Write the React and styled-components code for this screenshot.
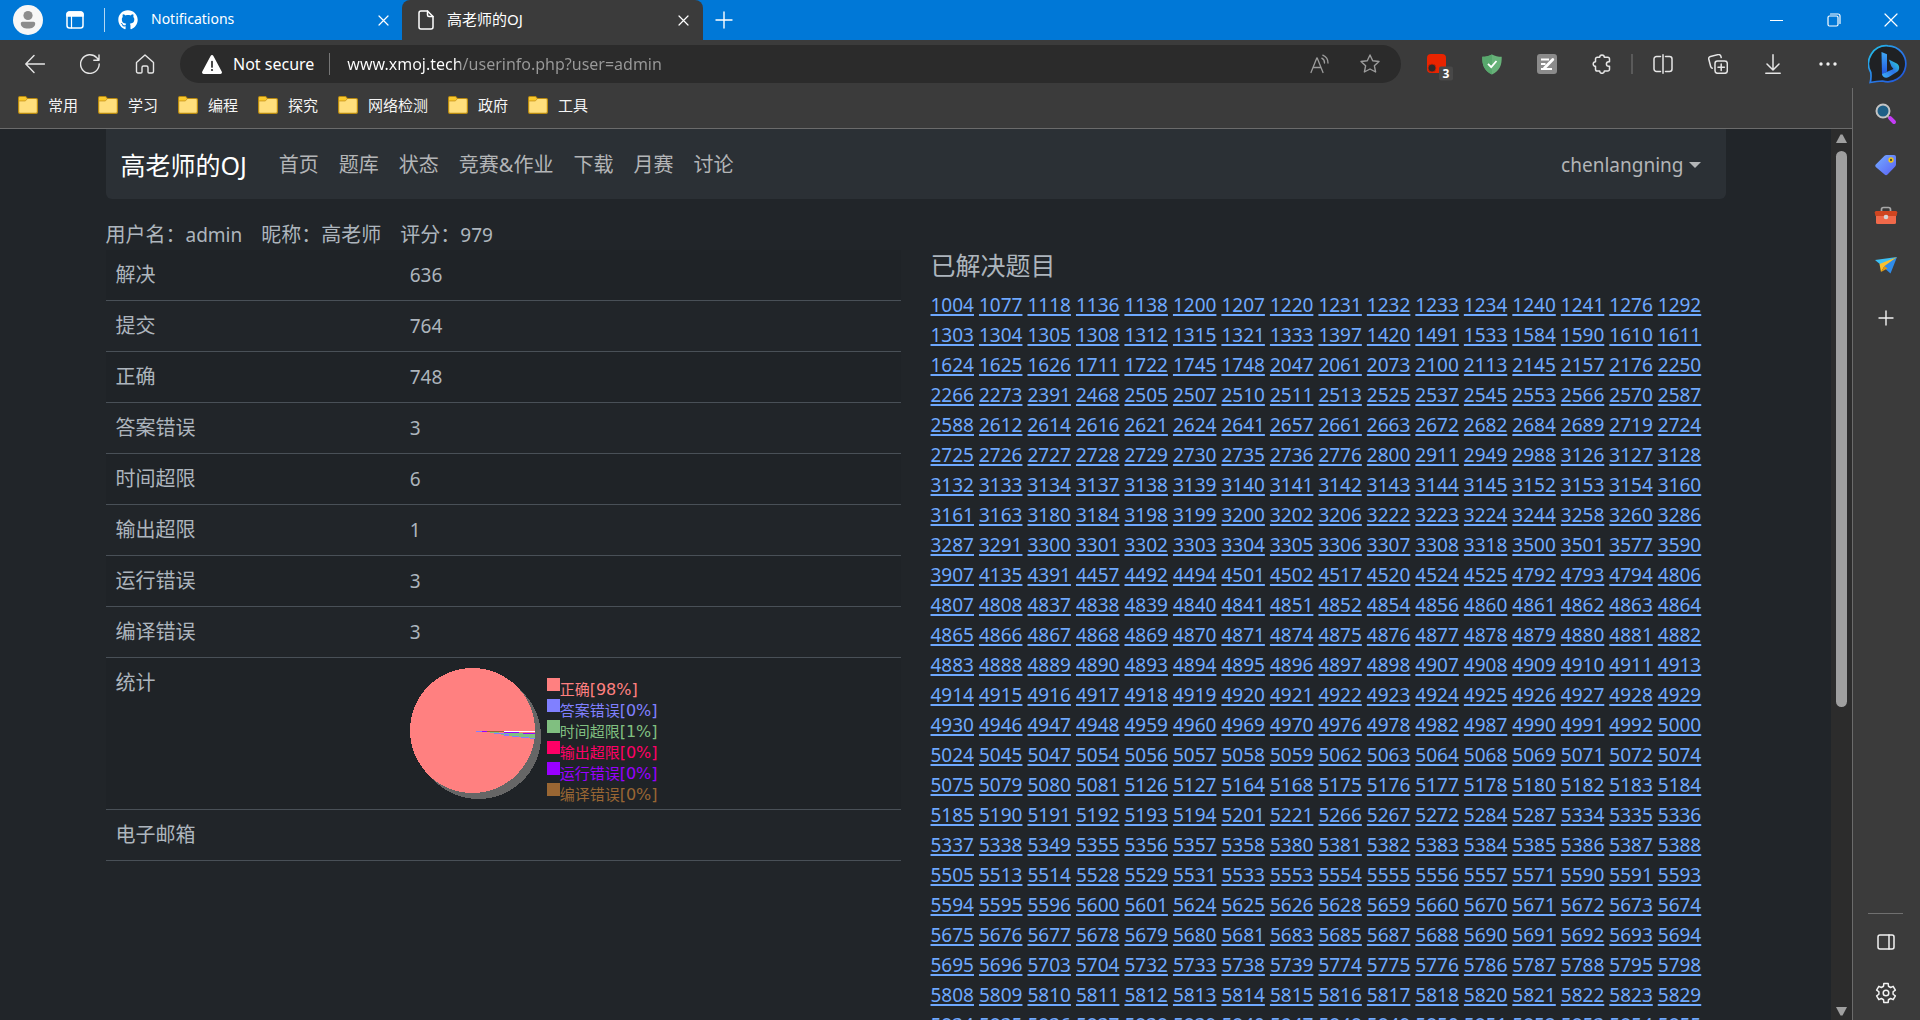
import React from "react";
import styled, { createGlobalStyle } from "styled-components";
import { FaGithub } from "react-icons/fa";

const SANS = '"Noto Sans", "Noto Sans CJK SC", sans-serif';

const GlobalStyle = createGlobalStyle`
  *, *::before, *::after { box-sizing: border-box; }
  body {
    margin: 0;
    background: #212529;
    color: #adb5bd;
    font-family: ${SANS};
    font-size: 20px;
    line-height: 30px;
  }
  button, input { font-family: inherit; border: 0; background: none; padding: 0; color: inherit; }
  svg { display: block; flex: none; }
`;

/* ---------- window frame ---------- */

const Window = styled.div`
  display: flex;
  flex-direction: column;
  height: 100vh;
  overflow: hidden;
`;

const TabStrip = styled.div`
  display: flex;
  align-items: center;
  flex: none;
  height: 40px;
  background: #0078d7;
  color: #fff;
`;

const StripButton = styled.button`
  display: flex;
  align-items: center;
  justify-content: center;
  flex: none;
  width: ${(p) => p.$width}px;
  height: 40px;
`;

const StripDivider = styled.span`
  width: 1px;
  height: 24px;
  margin-left: 10px;
  background: #b3d7f3;
`;

const Tab = styled.div`
  display: flex;
  align-items: center;
  width: ${(p) => (p.$active ? 301 : 297)}px;
  height: 40px;
  padding: ${(p) => (p.$active ? "0 10px 0 16px" : "0 9px 0 13px")};
  background: ${(p) => (p.$active ? "#3b3b3b" : "transparent")};
  border-radius: 8px 8px 0 0;
`;

const TabTitle = styled.button`
  display: flex;
  align-items: center;
  flex: 1;
  gap: 13px;
  height: 40px;
  color: #fff;
  font-size: ${(p) => (p.$latin ? 14 : 15)}px;
  line-height: 20px;
  text-align: left;
`;

const TitleText = styled.span`
  padding-bottom: 2px;
`;

const Spacer = styled.span`
  flex: 1;
`;

const Toolbar = styled.div`
  display: flex;
  align-items: center;
  flex: none;
  height: 48px;
  padding-left: 7px;
  background: #3b3b3b;
  color: #e6e6e6;
`;

const ToolButton = styled.button`
  display: flex;
  align-items: center;
  justify-content: center;
  flex: none;
  width: 55px;
  height: 48px;
`;

const AddressBar = styled.div`
  display: flex;
  align-items: center;
  flex: 1;
  height: 38px;
  margin: 0 8px;
  padding: 0 6px 0 22px;
  border-radius: 19px;
  background: #2b2b2b;
`;

const Security = styled.button`
  display: flex;
  align-items: center;
  gap: 11px;
  padding-right: 15px;
  border-right: 1px solid #767676;
  color: #fff;
  font-size: 16px;
  line-height: 22px;
`;

const Url = styled.input`
  flex: 1;
  height: 30px;
  padding: 0 0 1px 17px;
  outline: 0;
  font-size: 16px;
  color: transparent;
  background: linear-gradient(90deg, #fff 130px, #9a9a9a 130px);
  background-clip: text;
  -webkit-background-clip: text;
`;

const PillButton = styled.button`
  display: flex;
  align-items: center;
  justify-content: center;
  width: 50px;
  height: 38px;
  color: #9c9c9c;
`;

const ToolDivider = styled.span`
  width: 2px;
  height: 20px;
  margin: 0 2px;
  background: #5a5a5a;
`;

const Assistant = styled.button`
  display: flex;
  align-items: center;
  justify-content: center;
  width: 65px;
  height: 48px;
  padding-bottom: 1px;
`;

const Below = styled.div`
  display: flex;
  flex: 1;
  min-height: 0;
`;

const Left = styled.div`
  display: flex;
  flex-direction: column;
  flex: 1;
  min-width: 0;
  background: #3b3b3b;
`;

const Bookmarks = styled.nav`
  display: flex;
  align-items: center;
  flex: none;
  gap: 20px;
  height: 41px;
  padding: 0 18px 6px;
  border-bottom: 1px solid #6b6b6b;
`;

const Bookmark = styled.a`
  display: flex;
  align-items: center;
  gap: 10px;
  color: #f5f5f5;
  font-size: 15px;
  line-height: 20px;
  text-decoration: none;
`;

const Viewport = styled.div`
  display: flex;
  flex: 1;
  min-height: 0;
`;

const ScrollTrack = styled.div`
  display: flex;
  flex-direction: column;
  align-items: center;
  width: 21px;
  padding: 5px 0 4px;
  background: #2c2c2c;
`;

const ScrollThumb = styled.div`
  width: 11px;
  height: 63%;
  margin-top: 8px;
  border-radius: 6px;
  background: #9f9f9f;
`;

const Sidebar = styled.aside`
  display: flex;
  flex-direction: column;
  align-items: center;
  flex: none;
  width: 68px;
  padding: 0 2px 2px 0;
  border-left: 1px solid #6b6b6b;
  background: #3b3b3b;
  color: #f2f2f2;
`;

const SideButton = styled.button`
  display: flex;
  align-items: center;
  justify-content: center;
  width: 51px;
  height: 51px;
`;

const SideDivider = styled.span`
  width: 35px;
  height: 1px;
  margin-bottom: 2px;
  background: #707070;
`;

/* ---------- page ---------- */

const Page = styled.main`
  flex: 1;
  min-width: 0;
  overflow: hidden;
  background: #212529;
`;

const Container = styled.div`
  max-width: 1650px;
  margin: 0 auto;
  padding: 0 15px;
`;

const Navbar = styled.nav`
  display: flex;
  align-items: center;
  height: 70px;
  padding: 2px 15px 0;
  border-radius: 0 0 6px 6px;
  background: #2b3035;
`;

const Brand = styled.a`
  margin-right: 22px;
  color: #fff;
  font-size: 25px;
  text-decoration: none;
`;

const NavLink = styled.a`
  padding: 10px;
  color: #b3b5b7;
  text-decoration: none;
`;

const UserMenu = styled.button`
  display: flex;
  align-items: center;
  gap: 5px;
  margin-left: auto;
  padding: 10px;
  color: #b3b5b7;
  font-size: 19px;
  line-height: 30px;
`;

const Summary = styled.div`
  display: flex;
  gap: 19px;
  padding-top: 21px;
`;

const Latin = styled.span`
  font-size: 19px;
`;

const Columns = styled.div`
  display: grid;
  grid-template-columns: 1fr 1fr;
  gap: 30px;
  align-items: start;
`;

const StatsTable = styled.table`
  width: 100%;
  border-collapse: separate;
  border-spacing: 0;
`;

const StatsRow = styled.tr`
  &:nth-child(odd) { background: #1f2327; }
`;

const StatsLabel = styled.th`
  width: 37%;
  height: 51px;
  padding: 10px;
  border-bottom: 1px solid #495057;
  font-weight: 400;
  text-align: left;
  vertical-align: top;
`;

const StatsValue = styled.td`
  padding: 10px;
  border-bottom: 1px solid #495057;
  font-size: 19px;
  vertical-align: top;
`;

const Chart = styled.div`
  display: flex;
  gap: 6px;
  height: 131px;
`;

const Legend = styled.ul`
  margin: 0;
  padding: 10px 0 0;
  list-style: none;
`;

const LegendItem = styled.li`
  display: flex;
  height: 21px;
  color: ${(p) => p.$color};
  font-family: "DejaVu Sans", "Noto Sans CJK SC", sans-serif;
  font-size: 15px;
  line-height: 24px;
  white-space: nowrap;
  &::before {
    content: "";
    width: 13px;
    height: 13px;
    background: ${(p) => p.$color};
  }
`;

const Share = styled.span`
  font-size: 16px;
`;

const Heading = styled.h2`
  margin: 0 0 10px;
  font-size: 25px;
  line-height: 30px;
  font-weight: 400;
`;

const Problems = styled.div`
  display: flex;
  flex-wrap: wrap;
  column-gap: 5px;
`;

const Problem = styled.a`
  color: #6ea8fe;
  font-size: 19px;
  line-height: 30px;
  text-decoration: underline;
  text-decoration-thickness: 2px;
  text-underline-offset: 2px;
`;

/* ---------- icons ---------- */

const Line = ({ w = 20, h = w, sw = 1.5, children, ...rest }) => (
  <svg width={w} height={h} viewBox={`0 0 ${w} ${h}`} fill="none" stroke="currentColor"
    strokeWidth={sw} strokeLinecap="round" strokeLinejoin="round" aria-hidden="true" {...rest}>
    {children}
  </svg>
);

const Avatar = () => (
  <svg width="30" height="30" viewBox="0 0 30 30" aria-hidden="true">
    <circle cx="15" cy="15" r="15" fill="#f7f7f7" />
    <circle cx="15" cy="10.5" r="4.6" fill="#8c8c8c" />
    <path d="M9.5 16.8h11c1 0 1.7.7 1.7 1.7 0 3.400-3 5.100-7.200 5.100s-7.200-1.700-7.200-5.100c0-1 .7-1.700 1.700-1.700z" fill="#8c8c8c" />
  </svg>
);

const Workspaces = () => (
  <Line w={18} sw={1.5}>
    <rect x="1" y="1" width="16" height="16" rx="2.500" />
    <path d="M1 3.500a2.500 2.500 0 0 1 2.500-2.500h11a2.500 2.500 0 0 1 2.500 2.500V5H1z" fill="currentColor" />
    <path d="M5.500 5v12" strokeWidth="1.200" />
  </Line>
);

const Cross = ({ size = 11 }) => (
  <Line w={size} sw={1.2}><path d={`M1 1L${size - 1} ${size - 1}M${size - 1} 1L1 ${size - 1}`} /></Line>
);

const Plus = ({ size = 18 }) => (
  <Line w={size} sw={1.4}><path d={`M${size / 2} 1v${size - 2}M1 ${size / 2}h${size - 2}`} /></Line>
);

const FilePage = () => (
  <Line w={16} h={20} sw={1.500}>
    <path d="M3 1h6.500L15 6.500V17a2 2 0 0 1-2 2H3a2 2 0 0 1-2-2V3a2 2 0 0 1 2-2z" />
    <path d="M9.500 1v4a1.500 1.500 0 0 0 1.500 1.500h4" />
  </Line>
);

const Back = () => <Line sw={1.4}><path d="M19.500 10H1M9 1.500L.8 10 9 18.500" /></Line>;

const Reload = () => (
  <Line sw={1.4}><path d="M19.200 10A9.300 9.300 0 1 1 16.800 3.800L18.800 6M19 1v5.200h-5.200" /></Line>
);

const Home = () => (
  <Line sw={1.4}>
    <path d="M1.500 8.500L10 1l8.500 7.500V17.500a1.500 1.500 0 0 1-1.500 1.500h-3a1 1 0 0 1-1-1v-4.500a1.500 1.500 0 0 0-1.500-1.500h-3A1.500 1.500 0 0 0 7 13.500V18a1 1 0 0 1-1 1H3a1.500 1.500 0 0 1-1.500-1.500z" />
  </Line>
);

const Warning = () => (
  <svg width="20" height="19" viewBox="0 0 20 19" aria-hidden="true">
    <path d="M8.600.9a1.600 1.600 0 0 1 2.800 0l8.300 15.700a1.600 1.600 0 0 1-1.400 2.400H1.700a1.600 1.600 0 0 1-1.400-2.400z" fill="#fff" />
    <path d="M10 6.500v5.500" stroke="#2b2b2b" strokeWidth="1.700" strokeLinecap="round" />
    <circle cx="10" cy="15" r="1.100" fill="#2b2b2b" />
  </svg>
);

const ReadAloud = () => (
  <Line sw={1.300}>
    <path d="M1 18.500L6.800 4h.4L13 18.500M3 13.500h8" />
    <path d="M11.800 4.200a5 5 0 0 1 2.700 4.800M12.800 1.200a8.500 8.500 0 0 1 5.200 7.800" />
  </Line>
);

const Star = () => (
  <Line sw={1.4}>
    <path d="M10 1l2.700 5.700 6.300.8-4.600 4.300 1.200 6.200L10 15l-5.600 3 1.200-6.200L1 7.500l6.300-.8z" />
  </Line>
);

const BlockerExt = () => (
  <svg width="34" height="36" viewBox="0 0 34 36" aria-hidden="true">
    <rect x="7" y="8" width="19" height="19" rx="4" fill="#e92400" />
    <circle cx="12" cy="22" r="4" fill="#2f2a2a" stroke="#d02000" strokeWidth=".8" />
    <rect x="19" y="20.500" width="14" height="14" rx="2" fill="#484848" />
    <text x="22.500" y="32" fontFamily="Noto Sans, sans-serif" fontWeight="700" fontSize="12" fill="#fff">3</text>
  </svg>
);

const Shield = () => (
  <svg width="20" height="21" viewBox="0 0 20 21" aria-hidden="true">
    <path d="M10 .5c3 1.700 6.200 2.200 9.700 2.300.2 8.200-1.700 13.700-9.700 17.700C2 16.500.1 11 .3 2.800 3.800 2.700 7 2.200 10 .5z" fill="#67b279" />
    <path d="M10 .5C7 2.200 3.800 2.700.3 2.800.1 11 2 16.500 10 20.500z" fill="#58a86d" />
    <path d="M6 9.800l3.200 3.400L14.500 7" fill="none" stroke="#fff" strokeWidth="1.800" />
  </svg>
);

const NotesExt = () => (
  <svg width="20" height="20" viewBox="0 0 20 20" fill="none" aria-hidden="true">
    <rect width="20" height="20" rx="3" fill="#8b8b8b" />
    <path d="M4 5.500h8M4 10h4.500M4 15h11" stroke="#fff" strokeWidth="1.800" />
    <path d="M15.800 5.500L7.500 14" stroke="#fff" strokeWidth="2.800" strokeLinecap="round" />
  </svg>
);

const Puzzle = () => (
  <Line sw={1.500}>
    <path d="M7.700 3.200a2.300 2.300 0 0 1 4.600 0h3.400a1.800 1.800 0 0 1 1.800 1.800v2.700h-.8a2.300 2.300 0 0 0 0 4.600h.8v2.900a1.800 1.800 0 0 1-1.800 1.800h-3.400a2.300 2.300 0 0 1-4.600 0H5.300a1.800 1.800 0 0 1-1.800-1.800v-2.900a2.300 2.300 0 0 1 0-4.600V5a1.800 1.800 0 0 1 1.800-1.800z" />
  </Line>
);

const Split = () => (
  <Line sw={1.500}>
    <path d="M7.500 2.500H3.500A2.500 2.500 0 0 0 1 5v10a2.500 2.500 0 0 0 2.500 2.500h4M12.500 2.500h4A2.500 2.500 0 0 1 19 5v10a2.500 2.500 0 0 1-2.500 2.500h-4M10 .8v18.400" />
  </Line>
);

const Collections = () => (
  <Line sw={1.500}>
    <rect x="7" y="7" width="12.300" height="12.300" rx="2.500" />
    <path d="M13.200 10v6.400M10 13.200h6.400" />
    <path d="M4.200 14.200a2.500 2.500 0 0 1-1.500-1.700L.8 5.200a2.300 2.300 0 0 1 1.700-2.800l7.600-1.800a2.300 2.300 0 0 1 2.800 1.700l.3 1.200" />
  </Line>
);

const Download = () => (
  <Line sw={1.500}><path d="M10 .8v14.500M4 10l6 6 6-6M2.800 19.200h14.400" /></Line>
);

const Dots = () => (
  <svg width="18" height="4" viewBox="0 0 18 4" fill="#f0f0f0" aria-hidden="true">
    <circle cx="2" cy="2" r="1.700" /><circle cx="9" cy="2" r="1.700" /><circle cx="16" cy="2" r="1.700" />
  </svg>
);

const Bing = () => (
  <svg width="40" height="40" viewBox="0 0 40 40" aria-hidden="true">
    <defs>
      <linearGradient id="ring" x1="0" y1="0" x2="1" y2="1">
        <stop offset="0" stopColor="#21c7e8" /><stop offset=".5" stopColor="#2a7de8" /><stop offset="1" stopColor="#1d4fd8" />
      </linearGradient>
      <linearGradient id="stem" x1="0" y1="0" x2="0" y2="1">
        <stop offset="0" stopColor="#3fa9f5" /><stop offset="1" stopColor="#2154e0" />
      </linearGradient>
      <linearGradient id="bowl" x1="0" y1="1" x2="1" y2="0">
        <stop offset="0" stopColor="#3fb4f7" /><stop offset=".5" stopColor="#2b72e8" /><stop offset="1" stopColor="#2de0d0" />
      </linearGradient>
    </defs>
    <path d="M20 1.800a18 18 0 1 1-5.500 35.200c-4 .3-8 .8-12.300 1.500 1-3.500 1-6.500.6-10A18 18 0 0 1 20 1.800z" fill="#1f2124" stroke="url(#ring)" strokeWidth="1.700" />
    <path d="M13.500 8l5.500 2.200v17.300L14 31z" fill="url(#stem)" />
    <path d="M20.800 15.500l8 4a5 5 0 0 1 0 8.500l-8 5c-2.500 1.500-6.300.8-6.800-3l11.500-5-2.200-2.800z" fill="url(#bowl)" />
  </svg>
);

const Magnifier = () => (
  <svg width="22" height="22" viewBox="0 0 22 22" fill="none" aria-hidden="true">
    <path d="M12.500 13l2.500 2.500" stroke="#9a9a9a" strokeWidth="2" />
    <path d="M15.200 15.200l3.800 3.800" stroke="#c43cf5" strokeWidth="4" strokeLinecap="round" />
    <circle cx="8" cy="8" r="6.500" fill="#1f5f86" stroke="#c4c4c4" strokeWidth="2" />
  </svg>
);

const Tag = () => (
  <svg width="22" height="22" viewBox="0 0 22 22" aria-hidden="true">
    <defs>
      <linearGradient id="tag" x1="0" y1="0" x2="1" y2="1">
        <stop offset="0" stopColor="#74adff" /><stop offset="1" stopColor="#5a60f5" />
      </linearGradient>
    </defs>
    <path d="M11.500 1H19a2 2 0 0 1 2 2v7.500a3 3 0 0 1-.8 2l-7.700 8a2 2 0 0 1-2.900 0L1 13.200a2 2 0 0 1 0-2.900l8.500-8.500a3 3 0 0 1 2-.8z" fill="url(#tag)" />
    <circle cx="16" cy="6" r="1.900" fill="#4a4a2a" stroke="#f0c419" strokeWidth="1.500" />
  </svg>
);

const Toolbox = () => (
  <svg width="24" height="20" viewBox="0 0 24 20" aria-hidden="true">
    <path d="M7.500 6V3.500a2 2 0 0 1 2-2h5a2 2 0 0 1 2 2V6" fill="none" stroke="#a9a9a9" strokeWidth="1.700" />
    <path d="M2 9h20v7.500a1.500 1.500 0 0 1-1.500 1.500h-17A1.500 1.500 0 0 1 2 16.500z" fill="#f0694a" />
    <path d="M2.200 5h19.600A1.500 1.500 0 0 1 23.300 6.500L22.500 10h-21L.7 6.500A1.500 1.500 0 0 1 2.200 5z" fill="#cf4520" />
    <circle cx="12" cy="11" r="2.300" fill="#d5d5d5" />
  </svg>
);

const PaperPlane = () => (
  <svg width="22" height="20" viewBox="0 0 22 20" aria-hidden="true">
    <path d="M0 3L22 0 6 8z" fill="#3cc0f5" />
    <path d="M22 0L15.500 16.500 6 8z" fill="#2f8cea" />
    <path d="M22 0L4.500 7 6 15l3.500-6z" fill="#fbc02d" />
    <path d="M6 15l3.500-6 3 2.500z" fill="#e09612" />
  </svg>
);

const PanelIcon = () => (
  <Line w={18} h={16} sw={1.5}><rect x="1" y="1" width="16" height="14" rx="2" /><path d="M12 1v14" /></Line>
);

const gearPath = Array.from({ length: 6 }, (_, i) => {
  const point = (deg, r) => {
    const a = ((i * 60 - 90 + deg) * Math.PI) / 180;
    return `${(11 + r * Math.cos(a)).toFixed(2)} ${(11 + r * Math.sin(a)).toFixed(2)}`;
  };
  return `${point(-20, 7.2)} L${point(-13, 9.8)} L${point(13, 9.8)} L${point(20, 7.2)}`;
}).join(" L");

const Gear = () => (
  <Line w={22} sw={1.500}><path d={`M${gearPath} Z`} /><circle cx="11" cy="11" r="2.800" /></Line>
);

const Folder = () => (
  <svg width="20" height="18" viewBox="0 0 20 18" aria-hidden="true">
    <path d="M.6 2A1.400 1.400 0 0 1 2 .6h5.500L9.200 2.500H18A1.400 1.400 0 0 1 19.400 4v12A1.400 1.400 0 0 1 18 17.400H2A1.400 1.400 0 0 1 .6 16z" fill="#ffdf7d" stroke="#b98a10" strokeWidth="1.200" />
    <path d="M1.200 1.800L2 1.200h5.200l1.500 1.600L7.200 4.800h-6z" fill="#fbc926" />
    <path d="M1.200 4.900h6.200l1.800-2" fill="none" stroke="#c9961a" strokeWidth=".9" />
  </svg>
);

const Triangle = ({ down }) => (
  <svg width="11" height="9" viewBox="0 0 11 9" aria-hidden="true">
    <path d={down ? "M0 0h11L6.500 8.500h-2z" : "M0 9h11L6.500.5h-2z"} fill="#9f9f9f" />
  </svg>
);

const Caret = () => (
  <svg width="12" height="6" viewBox="0 0 12 6" aria-hidden="true"><path d="M0 0h12L6 6z" fill="currentColor" /></svg>
);

const Pie = () => (
  <svg width="131" height="131" viewBox="0 0 131 131" shapeRendering="crispEdges" role="img" aria-label="统计">
    <circle cx="68.500" cy="68.500" r="62.500" fill="#666" />
    <circle cx="62.500" cy="62.500" r="62.500" fill="#ff8080" />
    <path d="M77 64L125 66V71L94 67z" fill="#80bf80" />
    <path d="M66 63h6v1h-6zM84 65h10v1h-10zM94 66h5v2h-5zM102 68h7v1h-7zM111 69h8v1h-8zM120 70h5v1h-5z" fill="#8080ff" />
    <path d="M77 63h17v1h-17z" fill="#996633" />
    <path d="M72 63h5v1h-5zM94 64h15v1h-15zM113 65h12v1h-12z" fill="#9900ff" />
    <path d="M94 63h31v1h-31z" fill="#fff" />
  </svg>
);

/* ---------- data ---------- */

const bookmarks = ["常用", "学习", "编程", "探究", "网络检测", "政府", "工具"];
const navLinks = ["首页", "题库", "状态", "竞赛&作业", "下载", "月赛", "讨论"];

const stats = [
  ["解决", 636], ["提交", 764], ["正确", 748], ["答案错误", 3],
  ["时间超限", 6], ["输出超限", 1], ["运行错误", 3], ["编译错误", 3],
];

const legend = [
  ["正确", "98%", "#ff8080"], ["答案错误", "0%", "#8080ff"], ["时间超限", "1%", "#80bf80"],
  ["输出超限", "0%", "#ff0066"], ["运行错误", "0%", "#9900ff"], ["编译错误", "0%", "#996633"],
];

const problems = `
1004 1077 1118 1136 1138 1200 1207 1220 1231 1232 1233 1234 1240 1241 1276 1292
1303 1304 1305 1308 1312 1315 1321 1333 1397 1420 1491 1533 1584 1590 1610 1611
1624 1625 1626 1711 1722 1745 1748 2047 2061 2073 2100 2113 2145 2157 2176 2250
2266 2273 2391 2468 2505 2507 2510 2511 2513 2525 2537 2545 2553 2566 2570 2587
2588 2612 2614 2616 2621 2624 2641 2657 2661 2663 2672 2682 2684 2689 2719 2724
2725 2726 2727 2728 2729 2730 2735 2736 2776 2800 2911 2949 2988 3126 3127 3128
3132 3133 3134 3137 3138 3139 3140 3141 3142 3143 3144 3145 3152 3153 3154 3160
3161 3163 3180 3184 3198 3199 3200 3202 3206 3222 3223 3224 3244 3258 3260 3286
3287 3291 3300 3301 3302 3303 3304 3305 3306 3307 3308 3318 3500 3501 3577 3590
3907 4135 4391 4457 4492 4494 4501 4502 4517 4520 4524 4525 4792 4793 4794 4806
4807 4808 4837 4838 4839 4840 4841 4851 4852 4854 4856 4860 4861 4862 4863 4864
4865 4866 4867 4868 4869 4870 4871 4874 4875 4876 4877 4878 4879 4880 4881 4882
4883 4888 4889 4890 4893 4894 4895 4896 4897 4898 4907 4908 4909 4910 4911 4913
4914 4915 4916 4917 4918 4919 4920 4921 4922 4923 4924 4925 4926 4927 4928 4929
4930 4946 4947 4948 4959 4960 4969 4970 4976 4978 4982 4987 4990 4991 4992 5000
5024 5045 5047 5054 5056 5057 5058 5059 5062 5063 5064 5068 5069 5071 5072 5074
5075 5079 5080 5081 5126 5127 5164 5168 5175 5176 5177 5178 5180 5182 5183 5184
5185 5190 5191 5192 5193 5194 5201 5221 5266 5267 5272 5284 5287 5334 5335 5336
5337 5338 5349 5355 5356 5357 5358 5380 5381 5382 5383 5384 5385 5386 5387 5388
5505 5513 5514 5528 5529 5531 5533 5553 5554 5555 5556 5557 5571 5590 5591 5593
5594 5595 5596 5600 5601 5624 5625 5626 5628 5659 5660 5670 5671 5672 5673 5674
5675 5676 5677 5678 5679 5680 5681 5683 5685 5687 5688 5690 5691 5692 5693 5694
5695 5696 5703 5704 5732 5733 5738 5739 5774 5775 5776 5786 5787 5788 5795 5798
5808 5809 5810 5811 5812 5813 5814 5815 5816 5817 5818 5820 5821 5822 5823 5829
5834 5835 5836 5837 5838 5839 5840 5847 5848 5849 5850 5851 5852 5853 5854 5855
`.trim().split(/\s+/);

/* ---------- app ---------- */

const Chrome = () => (
  <>
    <TabStrip>
      <StripButton $width={56} aria-label="Profile"><Avatar /></StripButton>
      <StripButton $width={38} aria-label="Workspaces"><Workspaces /></StripButton>
      <StripDivider />
      <Tab>
        <TabTitle $latin><FaGithub size={20} /><TitleText>Notifications</TitleText></TabTitle>
        <StripButton $width={20} aria-label="Close tab"><Cross /></StripButton>
      </Tab>
      <Tab $active>
        <TabTitle><FilePage /><TitleText>高老师的OJ</TitleText></TabTitle>
        <StripButton $width={20} aria-label="Close tab"><Cross /></StripButton>
      </Tab>
      <StripButton $width={42} aria-label="New tab"><Plus /></StripButton>
      <Spacer />
      <StripButton $width={57} aria-label="Minimize"><Line w={13} sw={1.2}><path d="M0 6.500h13" /></Line></StripButton>
      <StripButton $width={57} aria-label="Restore">
        <Line w={14} sw={1.2}><rect x="1" y="3" width="10" height="10" rx="1.500" /><path d="M3.500 1H11a2 2 0 0 1 2 2v7.500" /></Line>
      </StripButton>
      <StripButton $width={58} aria-label="Close window"><Cross size={14} /></StripButton>
    </TabStrip>
    <Toolbar>
      <ToolButton aria-label="Back"><Back /></ToolButton>
      <ToolButton aria-label="Refresh"><Reload /></ToolButton>
      <ToolButton aria-label="Home"><Home /></ToolButton>
      <AddressBar>
        <Security><Warning />Not secure</Security>
        <Url aria-label="Address" defaultValue="www.xmoj.tech/userinfo.php?user=admin" />
        <PillButton aria-label="Read aloud"><ReadAloud /></PillButton>
        <PillButton aria-label="Add to favorites"><Star /></PillButton>
      </AddressBar>
      <ToolButton aria-label="Blocker extension, 3"><BlockerExt /></ToolButton>
      <ToolButton aria-label="Shield extension"><Shield /></ToolButton>
      <ToolButton aria-label="Notes extension"><NotesExt /></ToolButton>
      <ToolButton aria-label="Extensions"><Puzzle /></ToolButton>
      <ToolDivider />
      <ToolButton aria-label="Split screen"><Split /></ToolButton>
      <ToolButton aria-label="Collections"><Collections /></ToolButton>
      <ToolButton aria-label="Downloads"><Download /></ToolButton>
      <ToolButton aria-label="Settings and more"><Dots /></ToolButton>
      <Assistant aria-label="Bing"><Bing /></Assistant>
    </Toolbar>
  </>
);

const UserInfo = () => (
  <Page>
    <Container>
      <Navbar>
        <Brand href="#">高老师的OJ</Brand>
        {navLinks.map((t) => <NavLink key={t} href="#">{t}</NavLink>)}
        <UserMenu>chenlangning<Caret /></UserMenu>
      </Navbar>
      <Summary>
        <span>用户名：<Latin>admin</Latin></span>
        <span>昵称：高老师</span>
        <span>评分：<Latin>979</Latin></span>
      </Summary>
      <Columns>
        <StatsTable>
          <tbody>
            {stats.map(([label, value]) => (
              <StatsRow key={label}>
                <StatsLabel scope="row">{label}</StatsLabel>
                <StatsValue>{value}</StatsValue>
              </StatsRow>
            ))}
            <StatsRow>
              <StatsLabel scope="row">统计</StatsLabel>
              <StatsValue>
                <Chart>
                  <Pie />
                  <Legend>
                    {legend.map(([text, share, color]) => (
                      <LegendItem key={text} $color={color}>{text}<Share>[{share}]</Share></LegendItem>
                    ))}
                  </Legend>
                </Chart>
              </StatsValue>
            </StatsRow>
            <StatsRow>
              <StatsLabel scope="row">电子邮箱</StatsLabel>
              <StatsValue />
            </StatsRow>
          </tbody>
        </StatsTable>
        <section>
          <Heading>已解决题目</Heading>
          <Problems>
            {problems.map((id) => <Problem key={id} href={`#${id}`}>{id}</Problem>)}
          </Problems>
        </section>
      </Columns>
    </Container>
  </Page>
);

export default function App() {
  return (
    <Window>
      <GlobalStyle />
      <Chrome />
      <Below>
        <Left>
          <Bookmarks>
            {bookmarks.map((t) => <Bookmark key={t} href="#"><Folder />{t}</Bookmark>)}
          </Bookmarks>
          <Viewport>
            <UserInfo />
            <ScrollTrack aria-hidden="true">
              <Triangle />
              <ScrollThumb />
              <Spacer />
              <Triangle down />
            </ScrollTrack>
          </Viewport>
        </Left>
        <Sidebar>
          <SideButton aria-label="Search"><Magnifier /></SideButton>
          <SideButton aria-label="Shopping"><Tag /></SideButton>
          <SideButton aria-label="Tools"><Toolbox /></SideButton>
          <SideButton aria-label="Drop"><PaperPlane /></SideButton>
          <SideButton aria-label="Add"><Plus size={16} /></SideButton>
          <Spacer />
          <SideDivider />
          <SideButton aria-label="Hide sidebar"><PanelIcon /></SideButton>
          <SideButton aria-label="Settings"><Gear /></SideButton>
        </Sidebar>
      </Below>
    </Window>
  );
}
